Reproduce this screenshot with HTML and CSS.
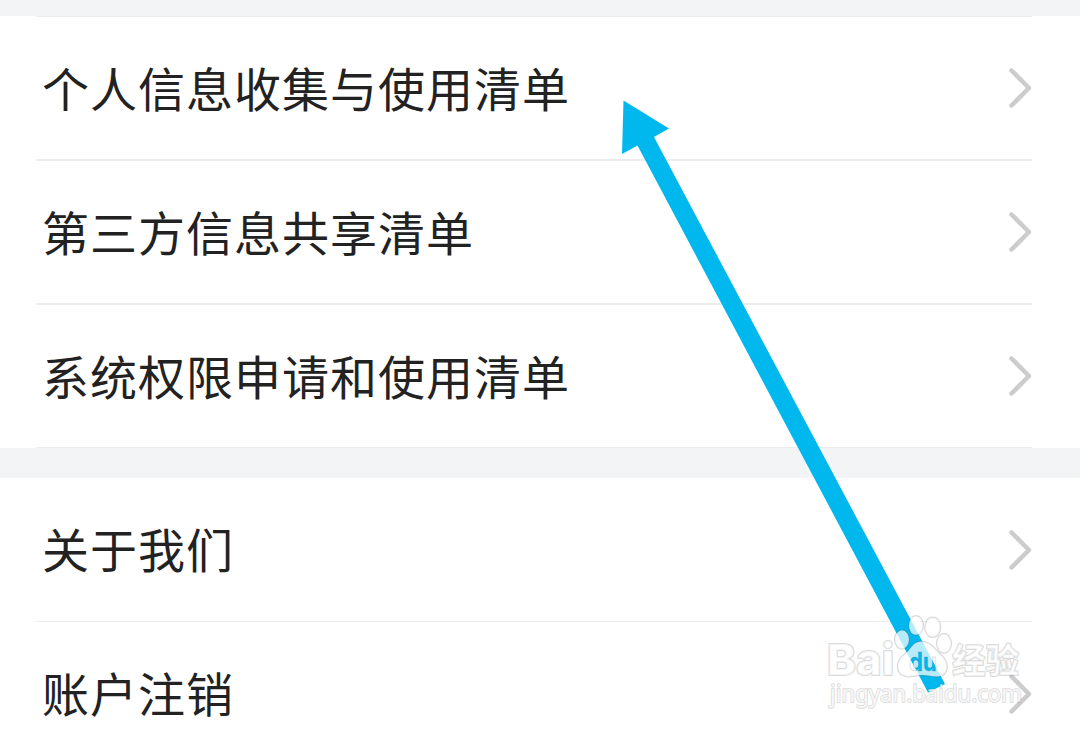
FILE: index.html
```html
<!DOCTYPE html>
<html lang="zh-CN">
<head>
  <meta charset="UTF-8">
  <title>设置</title>
  <meta name="viewport" content="width=device-width, initial-scale=1.0">
  <link rel="stylesheet" href="styles.css">
</head>
<body>
  <div class="page">
    <ul class="group privacy">
      <li class="item">
        <span class="label">个人信息收集与使用清单</span>
        <svg class="arrow" viewBox="0 0 24 40"><path d="M3.5 2.5L21 20L3.5 37.5"/></svg>
      </li>
      <li class="item">
        <span class="label">第三方信息共享清单</span>
        <svg class="arrow" viewBox="0 0 24 40"><path d="M3.5 2.5L21 20L3.5 37.5"/></svg>
      </li>
      <li class="item">
        <span class="label">系统权限申请和使用清单</span>
        <svg class="arrow" viewBox="0 0 24 40"><path d="M3.5 2.5L21 20L3.5 37.5"/></svg>
      </li>
    </ul>

    <ul class="group about">
      <li class="item">
        <span class="label">关于我们</span>
        <svg class="arrow" viewBox="0 0 24 40"><path d="M3.5 2.5L21 20L3.5 37.5"/></svg>
      </li>
      <li class="item">
        <span class="label">账户注销</span>
        <svg class="arrow" viewBox="0 0 24 40"><path d="M3.5 2.5L21 20L3.5 37.5"/></svg>
      </li>
    </ul>

    <!-- pointer and watermark over the list -->
    <svg class="overlay" viewBox="0 0 1080 731">
      <defs>
        <mask id="du" maskUnits="userSpaceOnUse" x="890" y="610" width="70" height="75">
          <rect x="890" y="610" width="70" height="75" fill="#fff"/>
          <text class="du-cut" x="909" y="670.5" textLength="28" lengthAdjust="spacingAndGlyphs">du</text>
        </mask>
      </defs>
      <polygon class="pointer" points="623.5,100.5 669,128.5 654,137 945,684 928,692.5 637.5,145.5 622,154"/>
      <g class="mark">
        <text class="brand" x="827" y="675" textLength="67" lengthAdjust="spacingAndGlyphs">Bai</text>
        <ellipse cx="902" cy="639.5" rx="7" ry="9.3"/>
        <ellipse cx="916" cy="625.5" rx="7" ry="9.5"/>
        <ellipse cx="932.7" cy="627.3" rx="7.6" ry="9.8"/>
        <ellipse cx="944" cy="643.5" rx="7" ry="9.5"/>
        <path mask="url(#du)" d="M921 641.5C912 641.5 911 650 904 655C897 660 896 670 901 674C908 679 914 675 922 675C930 675 938 679 944 674C949 669 947 661 942 656C935 650 931 641.5 921 641.5Z"/>
        <text class="du" x="909" y="670.5" textLength="28" lengthAdjust="spacingAndGlyphs">du</text>
        <text class="brand-cn" x="952" y="673" textLength="67" lengthAdjust="spacingAndGlyphs">经验</text>
        <text class="site" x="830" y="702" textLength="192" lengthAdjust="spacingAndGlyphs">jingyan.baidu.com</text>
      </g>
    </svg>
  </div>
</body>
</html>
```
FILE: styles.css
```css
html, body {
  margin: 0;
  padding: 0;
  height: 100%;
  overflow: hidden;
  background-color: #f3f4f6;
  font-family: "Noto Sans CJK SC", sans-serif;
  color: #222;
}

.page {
  position: relative;
  box-sizing: border-box;
  height: 731px;
  padding-top: 16px;
  overflow: hidden;
}

.group {
  list-style: none;
  margin: 0 0 30px;
  padding: 0 48px 0 36px;
  background-color: #fff;
}

.item {
  display: flex;
  align-items: center;
  justify-content: space-between;
  box-sizing: border-box;
  height: 144px;
  padding-left: 6px;
  border-bottom: 1px solid #ededee;
}

.privacy .item {
  border-bottom-width: 2px;
  height: 144px;
}

.privacy .item:first-child {
  height: 145px;
  border-top: 1px solid #ededee;
}

.privacy .item:last-child {
  height: 143px;
  border-bottom-width: 1px;
}

.label {
  padding-bottom: 3px;
  font-size: 47px;
  letter-spacing: 1px;
  line-height: 70px;
  white-space: nowrap;
}

.arrow {
  width: 24px;
  height: 40px;
  flex: none;
}

.arrow path {
  fill: none;
  stroke: #ccc;
  stroke-width: 4.5;
  stroke-linecap: round;
  stroke-linejoin: round;
}

.overlay {
  position: absolute;
  top: 0;
  left: 0;
  width: 1080px;
  height: 731px;
  pointer-events: none;
}

.pointer {
  fill: #00b8ee;
}

.mark {
  fill: rgba(255, 255, 255, 0.72);
  stroke: rgba(90, 90, 90, 0.24);
  stroke-width: 2;
  stroke-linejoin: round;
  paint-order: stroke;
}

.brand {
  font: 800 43px Inter, sans-serif;
}

.du, .du-cut {
  font: bold 25px Inter, sans-serif;
}

.du {
  fill: none;
  stroke-width: 1;
}

.du-cut {
  fill: #000;
  stroke: none;
}

.brand-cn {
  font: bold 34px "Noto Sans CJK SC", sans-serif;
}

.site {
  font: 23px "Noto Sans", sans-serif;
  stroke: rgba(90, 90, 90, 0.2);
}
```
